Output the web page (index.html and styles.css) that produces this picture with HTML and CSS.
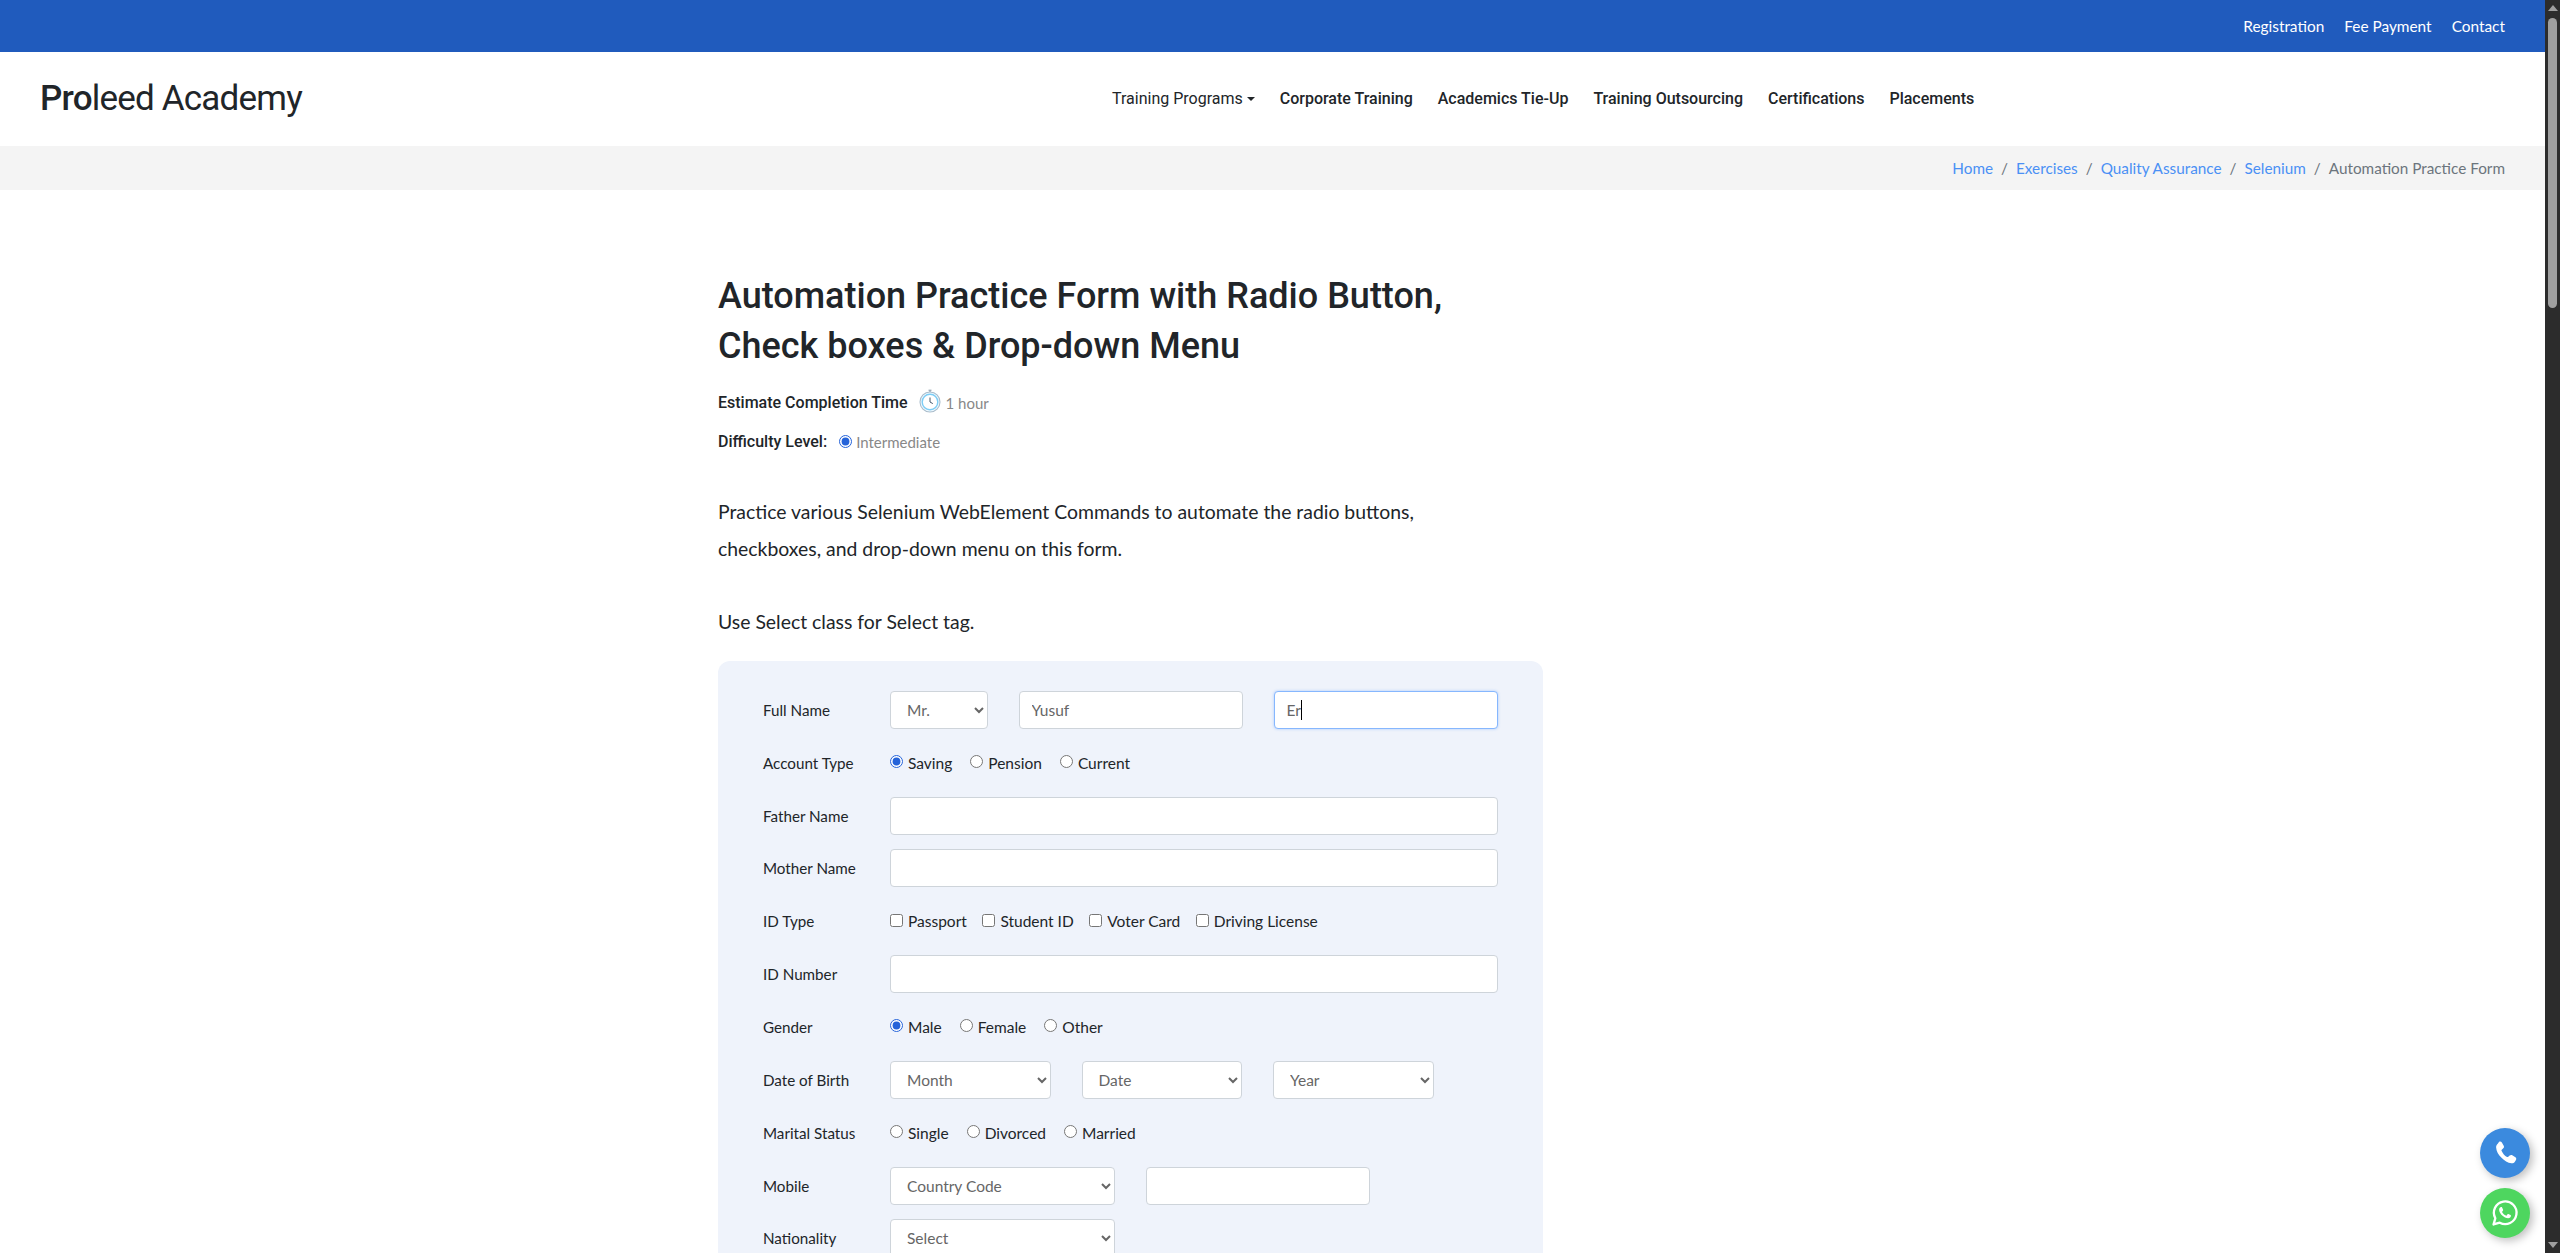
FILE: index.html
```html
<!DOCTYPE html>
<html>
    <head>
        <meta charset="utf-8">
        <meta name="viewport" content="width=device-width, initial-scale=1.0">
        <title>Automation Practice Form</title>
        <link rel="stylesheet" href="styles.css">
    </head>
    <body>
        <div class="window">
            <div class="page">
                <div class="topbar">
                    <a>Registration</a>
                    <a>Fee Payment</a>
                    <a>Contact</a>
                </div>
                <div class="navbar">
                    <div class="logo"><b>Pro</b>leed Academy</div>
                    <div class="menu">
                        <a class="light">Training Programs<i class="caret"></i></a>
                        <a>Corporate Training</a>
                        <a>Academics Tie-Up</a>
                        <a>Training Outsourcing</a>
                        <a>Certifications</a>
                        <a>Placements</a>
                    </div>
                </div>
                <div class="crumbs">
                    <a>Home</a><span class="sep">/</span>
                    <a>Exercises</a><span class="sep">/</span>
                    <a>Quality Assurance</a><span class="sep">/</span>
                    <a>Selenium</a><span class="sep">/</span>
                    <span class="current">Automation Practice Form</span>
                </div>
                <div class="content">
                    <h1>Automation Practice Form with Radio Button,<br>Check boxes &amp; Drop-down Menu</h1>
                    <div class="meta">
                        <b>Estimate Completion Time</b>
                        <svg class="clock" width="24" height="24" viewBox="0 0 24 24">
                            <circle cx="12" cy="13" r="10" fill="#eef8fe" stroke="#a9bccb" stroke-width="1.1"/>
                            <circle cx="12" cy="13" r="7.8" fill="#fff" stroke="#7dcdf5" stroke-width="1.4"/>
                            <path d="M12 8.500V13l2.800 1.600" fill="none" stroke="#44586b" stroke-width="1"/>
                            <path d="M10.500 1.200h3M12 1.200V3" fill="none" stroke="#8b9dac" stroke-width="1"/>
                        </svg>
                        <span class="muted">1 hour</span>
                    </div>
                    <div class="meta">
                        <b>Difficulty Level:</b>
                        <input class="level" type="radio" checked>
                        <span class="muted">Intermediate</span>
                    </div>
                    <p class="intro">Practice various Selenium WebElement Commands to automate the radio buttons,<br>checkboxes, and drop-down menu on this form.</p>
                    <p class="intro use">Use Select class for Select tag.</p>

                    <form class="card">
                        <div class="row">
                            <label>Full Name</label>
                            <select class="w-title"><option>Mr.</option></select>
                            <input class="w-name" type="text" value="Yusuf">
                            <div class="focused w-name">Er<i class="cursor"></i></div>
                        </div>
                        <div class="row opts">
                            <label>Account Type</label>
                            <div class="opt"><input type="radio" checked>Saving</div>
                            <div class="opt"><input type="radio">Pension</div>
                            <div class="opt"><input type="radio">Current</div>
                        </div>
                        <div class="row">
                            <label>Father Name</label>
                            <input class="w-full" type="text">
                        </div>
                        <div class="row">
                            <label>Mother Name</label>
                            <input class="w-full" type="text">
                        </div>
                        <div class="row opts">
                            <label>ID Type</label>
                            <div class="opt box"><input type="checkbox">Passport</div>
                            <div class="opt box"><input type="checkbox">Student ID</div>
                            <div class="opt box"><input type="checkbox">Voter Card</div>
                            <div class="opt box"><input type="checkbox">Driving License</div>
                        </div>
                        <div class="row">
                            <label>ID Number</label>
                            <input class="w-full" type="text">
                        </div>
                        <div class="row opts">
                            <label>Gender</label>
                            <div class="opt"><input type="radio" checked>Male</div>
                            <div class="opt"><input type="radio">Female</div>
                            <div class="opt"><input type="radio">Other</div>
                        </div>
                        <div class="row">
                            <label>Date of Birth</label>
                            <select class="w-date"><option>Month</option></select>
                            <select class="w-date"><option>Date</option></select>
                            <select class="w-date"><option>Year</option></select>
                        </div>
                        <div class="row opts">
                            <label>Marital Status</label>
                            <div class="opt"><input type="radio">Single</div>
                            <div class="opt"><input type="radio">Divorced</div>
                            <div class="opt"><input type="radio">Married</div>
                        </div>
                        <div class="row">
                            <label>Mobile</label>
                            <select class="w-half"><option>Country Code</option></select>
                            <input class="w-half" type="text">
                        </div>
                        <div class="row">
                            <label>Nationality</label>
                            <select class="w-half"><option>Select</option></select>
                        </div>
                    </form>
                </div>
            </div>
            <div class="scrollbar">
                <i class="arrow up"></i>
                <div class="track"><div class="thumb"></div></div>
                <i class="arrow down"></i>
            </div>
        </div>

        <a class="fab call">
            <svg width="26" height="26" viewBox="0 0 24 24"><path fill="#fff" d="M6.600 1.600c.9-.5 2-.2 2.500.7l1.700 3c.5.800.3 1.800-.4 2.400L9 8.900c-.3.3-.4.7-.2 1.100.5 1.200 1.200 2.300 2.100 3.300.9 1 1.900 1.800 3 2.400.4.200.8.100 1.100-.2l1.300-1.200c.7-.6 1.700-.7 2.400-.2l2.900 1.900c.8.600 1.100 1.700.5 2.500l-1 1.500c-.7 1-1.900 1.700-3.200 1.500-3.400-.4-6.500-2.300-9.100-5.100C5.900 13.700 4 10.400 3.800 6.900 3.700 5.600 4.300 4.300 5.300 3.500z"/></svg>
        </a>
        <a class="fab chat">
            <svg width="28" height="28" viewBox="0 0 24 24"><path fill="none" stroke="#fff" stroke-width="2" stroke-linejoin="round" d="M2.200 21.800l1.500-5.300a9.700 9.700 0 1 1 3.800 3.800z"/><path fill="#fff" d="M8.800 6.900c.3 0 .6 0 .8.500l.8 1.800c.1.300 0 .5-.1.700l-.6.800c-.2.200-.2.400-.1.600.7 1.300 1.800 2.300 3.200 2.900.2.100.4.100.6-.1l.8-1c.2-.2.400-.3.700-.2l1.800.9c.3.100.4.300.4.500 0 1.200-1 2.200-2.400 2.200-3.600-.2-7.200-3.500-7.700-6.800-.2-1.300.6-2.800 1.900-2.800z"/></svg>
        </a>
    </body>
</html>
```

FILE: styles.css
```css
*{
    box-sizing: border-box;
}
html, body{
    margin: 0;
    height: 100%;
    overflow: hidden;
}
body{
    font-family: "Lato", "Noto Sans", sans-serif;
    font-size: 16px;
    color: #212529;
}
a{
    text-decoration: none;
}
.window{
    display: flex;
    height: 100vh;
}
.page{
    flex: 1;
    min-width: 0;
    overflow: hidden;
}

/* top */
.topbar{
    height: 52px;
    background: #205bbd;
    padding-right: 40px;
    display: flex;
    justify-content: flex-end;
    align-items: center;
    gap: 20px;
    font-size: 15.4px;
}
.topbar a{
    color: #fff;
}
.navbar{
    height: 94px;
    padding: 0 40px 2px;
    display: flex;
    align-items: center;
}
.logo{
    font-family: "Roboto", sans-serif;
    font-size: 35px;
    letter-spacing: -0.8px;
    width: 1072px;
}
.logo b{
    font-weight: 500;
}
.menu{
    display: flex;
    gap: 25px;
    font-family: "Roboto", sans-serif;
    font-size: 16px;
    font-weight: 500;
}
.menu a{
    color: #212529;
}
.menu a.light{
    font-weight: 400;
}
.caret{
    display: inline-block;
    margin-left: 4px;
    vertical-align: 3px;
    border-top: 4px solid #212529;
    border-left: 4px solid transparent;
    border-right: 4px solid transparent;
}
.crumbs{
    height: 44px;
    background: #f4f4f4;
    padding-right: 40px;
    display: flex;
    justify-content: flex-end;
    align-items: center;
    font-size: 15.3px;
}
.crumbs a{
    color: #4a90f5;
}
.sep{
    color: #6c757d;
    margin: 0 8px;
}
.current{
    color: #6c757d;
}

/* content */
.content{
    width: 825px;
    margin-left: 718px;
    padding-top: 81px;
}
h1{
    margin: 0 0 12px;
    font-family: "Roboto", sans-serif;
    font-size: 36px;
    font-weight: 500;
    line-height: 50px;
}
.meta{
    display: flex;
    align-items: center;
    height: 39px;
    font-family: "Roboto", sans-serif;
    font-size: 16px;
}
.meta b{
    font-weight: 500;
}
.muted{
    color: #888;
    font-family: "Lato", sans-serif;
    font-size: 15px;
}
.clock{
    margin: -3px 4px 0 10px;
}
.level{
    margin: 0 4px 0 12px;
    accent-color: #2563d9;
}
.intro{
    margin: 32px 0 0;
    font-size: 19.4px;
    line-height: 37px;
}
.use{
    margin-top: 36px;
}

/* form */
.card{
    margin-top: 21px;
    padding: 30px 45px 0;
    background: #eff3fb;
    border-radius: 12px;
    height: 700px;
}
.row{
    display: flex;
    align-items: center;
    min-height: 38px;
    margin-bottom: 14px;
}
.row.opts{
    height: 40px;
    padding-bottom: 1px;
}
.row label{
    width: 127px;
    flex: none;
    font-size: 15.2px;
}
.row input[type=text], .row select, .focused{
    height: 38px;
    margin-right: 31px;
    padding: 0 12px;
    font: inherit;
    font-size: 15.5px;
    color: #666;
    background: #fff;
    border: 1px solid #ced4da;
    border-radius: 4px;
}
.focused{
    display: flex;
    align-items: center;
    margin-right: 0;
    border-color: #86b7fe;
    box-shadow: 0 0 3px rgba(13,110,253,.3);
}
.cursor{
    width: 1px;
    height: 20px;
    background: #000;
}
.w-title{
    width: 97.5px;
}
.w-name{
    width: 224px;
}
.w-half{
    width: 224.5px;
}
.w-date{
    width: 160.5px;
}
.w-full{
    width: 608px;
}
.row input.w-full{
    margin-right: 0;
}
.opt{
    display: flex;
    align-items: center;
    margin-right: 18px;
    font-size: 15.5px;
}
.opt input{
    width: 13px;
    height: 13px;
    margin: -2px 5px 0 0;
    accent-color: #2563d9;
}
.opt.box{
    margin-right: 15.5px;
}
.opt.box input{
    margin-top: 0;
}

/* scrollbar */
.scrollbar{
    width: 15px;
    flex: none;
    background: #2c2c2c;
    display: flex;
    flex-direction: column;
    align-items: center;
}
.arrow{
    flex: none;
    margin: 5px 0;
    border-left: 5px solid transparent;
    border-right: 5px solid transparent;
}
.arrow.up{
    border-bottom: 6px solid #9f9f9f;
}
.arrow.down{
    border-top: 6px solid #9f9f9f;
}
.track{
    flex: 1;
    width: 100%;
    padding: 2px 3px;
}
.thumb{
    height: 290px;
    background: #9f9f9f;
    border-radius: 5px;
}

/* floating buttons */
.fab{
    position: fixed;
    left: 2480px;
    width: 50px;
    height: 50px;
    border-radius: 50%;
    display: flex;
    align-items: center;
    justify-content: center;
    box-shadow: 3px 3px 8px rgba(0,0,0,.25);
}
.call{
    top: 1128px;
    background: #3b8ade;
}
.chat{
    top: 1188px;
    background: #4ed65f;
}
```
